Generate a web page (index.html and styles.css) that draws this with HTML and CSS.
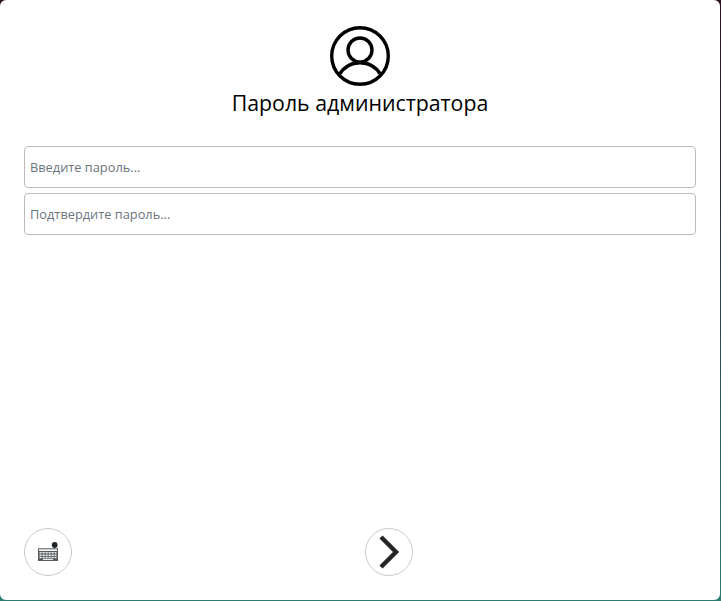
FILE: index.html
```html
<!DOCTYPE html>
<html lang="ru">
<head>
<meta charset="utf-8">
<title>Пароль администратора</title>
<link rel="stylesheet" href="styles.css">
</head>
<body>
<main class="window">
  <header class="head">
    <svg class="avatar" width="60" height="60" viewBox="0 0 60 60" fill="none" stroke="#000" stroke-width="3.400">
      <circle cx="30" cy="30" r="28.300"/>
      <circle cx="30" cy="24" r="12"/>
      <path d="M9.500 48.500C14 41 21.500 36.800 30 36.800s16 4.200 20.500 11.700"/>
    </svg>
    <h1 class="title">Пароль администратора</h1>
  </header>
  <form class="fields">
    <input class="field" type="password" placeholder="Введите пароль...">
    <input class="field" type="password" placeholder="Подтвердите пароль...">
  </form>
  <footer class="actions">
    <button class="round" type="button" aria-label="Клавиатура">
      <svg width="20" height="20" viewBox="0 0 20 20">
        <circle cx="16.700" cy="3" r="2.900" fill="#1f2226"/>
        <rect x="0" y="6.300" width="20" height="12.700" fill="#55585c"/>
        <rect x="1" y="7.300" width="18" height="1.700" fill="#f6f6f6"/>
        <path d="M1.500 10.800h17M1.500 13.200h17M1.500 15.600h17" stroke="#e8e8e8" stroke-width="1.500" stroke-dasharray="2.200 .8"/>
        <rect x="5" y="16.800" width="10" height="1.200" fill="#e8e8e8"/>
      </svg>
    </button>
    <button class="round next" type="button" aria-label="Далее">
      <svg width="22" height="34" viewBox="0 0 22 34" fill="none" stroke="#232629" stroke-width="4.400">
        <path d="M3 2l15 15L3 32"/>
      </svg>
    </button>
  </footer>
</main>
</body>
</html>
```
FILE: styles.css
```css
* { box-sizing: border-box; }
html, body { margin: 0; height: 100%; }
body {
  background: linear-gradient(#2b0f24, #2f7a70);
  font-family: "Open Sans", "Noto Sans", sans-serif;
  overflow: hidden;
}
.window {
  width: 720px;
  height: 600px;
  background: #fff;
  border-radius: 6px;
  display: flex;
  flex-direction: column;
  padding: 26px 24px 24px;
}
.head {
  display: flex;
  flex-direction: column;
  align-items: center;
}
.avatar { display: block; }
.title {
  margin: 1px 0 0;
  font-size: 21.300px;
  font-weight: 400;
  line-height: 31px;
  color: #000;
}
.fields {
  display: flex;
  flex-direction: column;
  gap: 5px;
  margin-top: 28px;
  flex: 1;
}
.field {
  width: 100%;
  height: 42px;
  border: 1px solid #bbb;
  border-radius: 4px;
  padding: 0 5px;
  font: 12.800px "Open Sans", "Noto Sans", sans-serif;
  background: #fff;
  outline: none;
}
.field::placeholder { color: #6c757d; opacity: 1; }
.actions { display: flex; }
.round {
  width: 48px;
  height: 48px;
  padding: 0;
  border: 1.500px solid #cacaca;
  border-radius: 50%;
  background: #fff;
  display: flex;
  align-items: center;
  justify-content: center;
}
.next { margin-left: 293px; }
```
